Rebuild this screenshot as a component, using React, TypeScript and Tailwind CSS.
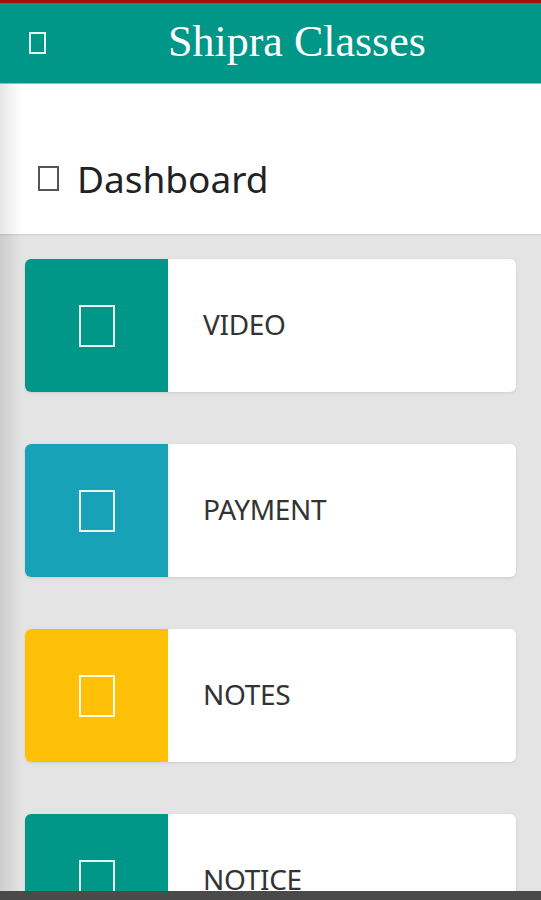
import React from "react";

const cards = [
  { label: "VIDEO", color: "bg-[#009688]" },
  { label: "PAYMENT", color: "bg-[#17a2b8]" },
  { label: "NOTES", color: "bg-[#ffc107]" },
  { label: "NOTICE", color: "bg-[#009688]" },
];

export default function App() {
  return (
    <div className="relative h-[900px] w-[541px] overflow-hidden bg-[#e4e4e4] font-['Noto_Sans',sans-serif]">
      <div className="h-[3px] bg-[#a30e0e]" />
      <header className="flex h-[81px] items-center border-b border-[#7fc9c1] bg-[#009688] text-white">
        <div className="ml-[29px] h-[22px] w-[17px] border-2 border-white/90" />
        <h1 className="ml-[122px] pb-[2px] font-['Liberation_Serif',serif] text-[44px] leading-none text-white">
          Shipra Classes
        </h1>
      </header>
      <div className="flex h-[150px] items-center bg-white pt-[39px] shadow-[0_1px_2px_rgba(0,0,0,0.12)]">
        <div className="ml-[38px] h-[25px] w-[21px] border-2 border-[#555]" />
        <span className="ml-[18px] text-[37px] leading-none text-[#222]">Dashboard</span>
      </div>
      <div className="flex flex-col gap-[52px] px-[25px] pt-[25px] pr-[25px]">
        {cards.map((c) => (
          <div
            key={c.label}
            className="flex h-[133px] overflow-hidden rounded-[6px] bg-white shadow-[0_1px_3px_rgba(0,0,0,0.1)]"
          >
            <div className={`flex w-[143px] items-center justify-center ${c.color}`}>
              <div className="h-[42px] w-[36px] border-2 border-white/90" />
            </div>
            <div className="flex items-center pb-[4px] pl-[35px] text-[28px] tracking-[-0.3px] text-[#333]">
              {c.label}
            </div>
          </div>
        ))}
      </div>
      <div className="pointer-events-none absolute left-0 top-[84px] h-full w-[22px] bg-gradient-to-r from-black/10 to-transparent" />
      <div className="absolute bottom-0 left-0 h-[9px] w-full bg-[#4a4a4a]" />
    </div>
  );
}
